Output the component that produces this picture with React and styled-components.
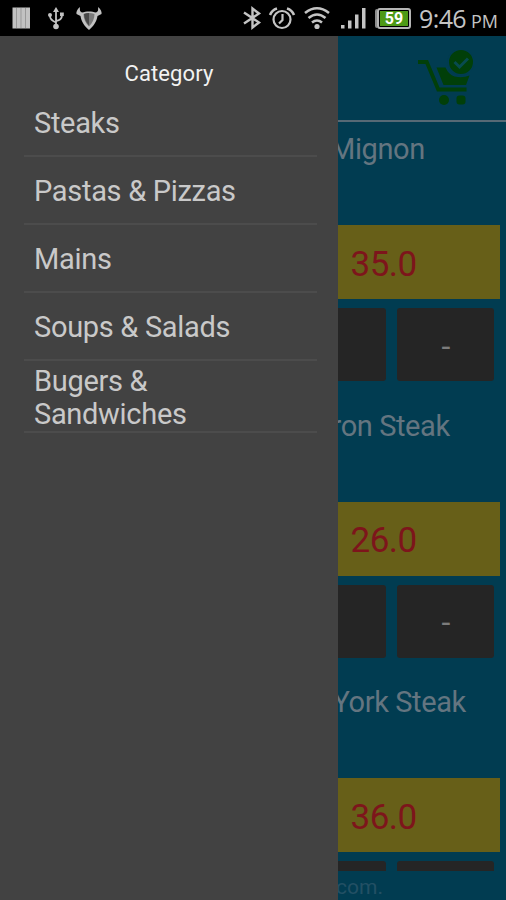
import React from 'react';
import styled, { createGlobalStyle } from 'styled-components';

const GlobalStyle = createGlobalStyle`
  * {
    box-sizing: border-box;
  }

  body {
    margin: 0;
    background: #000;
    font-family: Roboto, "Liberation Sans", sans-serif;
  }
`;

const Screen = styled.div`
  width: 506px;
  height: 900px;
  display: flex;
  flex-direction: column;
  overflow: hidden;
`;

const StatusBar = styled.header`
  height: 36px;
  flex: none;
  display: flex;
  align-items: center;
  padding: 0 8px 0 12px;
  background: #000;
  color: #c4c4c4;
`;

const StatusIcon = styled.svg`
  display: block;
  flex: none;
  width: ${({ $w }) => $w}px;
  height: 28px;
  margin-right: ${({ $gap }) => $gap || 0}px;
  overflow: visible;
`;

const Spacer = styled.div`
  flex: 1;
`;

const Battery = styled.div`
  width: 34px;
  height: 21px;
  flex: none;
  margin-right: 8px;
  padding: 1px;
  border: 2px solid #b5b5b5;
  border-radius: 3px;
  box-shadow: -3px 0 0 -1px #8d8d8d;
`;

const BatteryLevel = styled.div`
  height: 15px;
  display: flex;
  align-items: center;
  justify-content: center;
  background: #4d9a16;
  color: #fff;
  font-size: 16px;
  font-weight: 700;
  line-height: 15px;
`;

const Clock = styled.div`
  width: 79px;
  flex: none;
  display: flex;
  align-items: baseline;
  justify-content: space-between;
  padding-top: 3px;
  font-family: "Open Sans", sans-serif;
  font-size: 25px;
  line-height: 36px;
  letter-spacing: -0.6px;
  white-space: nowrap;
`;

const Meridiem = styled.span`
  font-size: 18px;
  letter-spacing: 0;
`;

const Body = styled.div`
  flex: 1;
  min-height: 0;
  display: flex;
`;

const Drawer = styled.nav`
  width: 338px;
  flex: none;
  padding: 24px 21px 0 24px;
  background: #424242;
`;

const DrawerTitle = styled.h1`
  margin: 0;
  height: 28px;
  padding-right: 3px;
  font-size: 22px;
  font-weight: 400;
  line-height: 28px;
  letter-spacing: 0.1px;
  text-align: center;
  color: #f2f2f2;
`;

const CategoryItem = styled.div`
  height: ${({ $height }) => $height}px;
  display: flex;
  align-items: center;
  padding: 4px 70px 0 10px;
  border-bottom: 2px solid #4c4c4c;
  font-size: 29px;
  line-height: 33px;
  letter-spacing: -0.31px;
  color: #c9c9c9;
`;

const Page = styled.main`
  flex: 1;
  min-width: 0;
  display: flex;
  flex-direction: column;
  overflow: hidden;
  background: #013c51;
`;

const PageHeader = styled.div`
  height: 86px;
  flex: none;
  display: flex;
  justify-content: flex-end;
  padding: 14px 32px 0 0;
  border-bottom: 2px solid #566975;
`;

const CartIcon = styled.svg`
  width: 56px;
  height: 56px;
  display: block;
`;

const MenuList = styled.div`
  height: 749px;
  flex: none;
  overflow: hidden;
`;

const MenuItem = styled.section`
  height: 276.5px;
`;

const ItemName = styled.h2`
  margin: 0 0 0 ${({ $shift }) => $shift}px;
  height: 103px;
  padding-top: 10px;
  font-size: 29px;
  font-weight: 400;
  line-height: 34px;
  letter-spacing: -0.4px;
  white-space: nowrap;
  color: #647580;
`;

const Price = styled.div`
  height: 74px;
  margin-right: 6px;
  padding: 2.5px 0 0 12.5px;
  background: #675f18;
  color: #7d151b;
  font-size: 35px;
  line-height: 74px;
  letter-spacing: -0.5px;
`;

const QuantityRow = styled.div`
  display: flex;
  gap: 11px;
  margin-top: 9px;
`;

const QuantityButton = styled.button`
  width: ${({ $width }) => $width}px;
  height: 73px;
  padding: 2px 0 0 1px;
  border: 0;
  border-radius: ${({ $cut }) => ($cut ? '0 3px 3px 0' : '3px')};
  background: #252525;
  color: #7c7c7c;
  font-family: inherit;
  font-size: 32px;
`;

const Footer = styled.footer`
  height: 29px;
  margin-left: -2px;
  font-size: 21px;
  line-height: 32px;
  letter-spacing: 0;
  color: #235064;
`;

const categories = [
  { name: 'Steaks', height: 68.5 },
  { name: 'Pastas & Pizzas', height: 68 },
  { name: 'Mains', height: 68 },
  { name: 'Soups & Salads', height: 68.5 },
  { name: 'Bugers & Sandwiches', height: 72 },
];

const dishes = [
  { name: 'Mignon', price: '35.0', shift: -8 },
  { name: 'ron Steak', price: '26.0', shift: -6.5 },
  { name: 'York Steak', price: '36.0', shift: -5.5 },
];

function StatusIcons() {
  return (
    <>
      <StatusIcon $w={18} $gap={18} viewBox="0 0 18 28">
        <path d="M0.500 3.500h17.500v21H0.500z" fill="#c2c2c2" />
        <path d="M4.500 4v20M9 4v20M13.500 4v20" stroke="#999" strokeWidth="1" />
      </StatusIcon>
      <StatusIcon $w={16} $gap={12} viewBox="0 0 16 28" fill="none" stroke="#c2c2c2" strokeWidth="1.8">
        <path d="M8 7v15M2 12q0 4 6 6.500M14 11q0 5-6 6" />
        <path d="M8 3l3 5H5z" fill="#c2c2c2" stroke="none" />
        <circle cx="8" cy="22.500" r="2.800" fill="#c2c2c2" stroke="none" />
        <circle cx="2" cy="11" r="2" fill="#c2c2c2" stroke="none" />
        <path d="M12 8.500h3.800v3.600H12z" fill="#c2c2c2" stroke="none" />
      </StatusIcon>
      <StatusIcon $w={26} viewBox="0 0 26 28">
        <path
          d="M4 3C1 5.500 0 8 .5 10l4 2c1 6 4 10 8.500 14 4.500-4 7.500-8 8.500-14l4-2C26 8 25 5.500 22 3c.5 3 0 5-2 5.500-4-1.500-10-1.500-14 0C4 8 3.500 6 4 3z"
          fill="#c2c2c2"
        />
        <path d="M7.500 10q5.500-2 11 0c0 5-2 9-5.500 12.500C9.500 19 7.500 15 7.500 10z" fill="#7a7a7a" />
        <path d="M8 10q2.500-1 5-1v12.500Q8.500 17 8 10z" fill="#484848" />
      </StatusIcon>
      <Spacer />
      <StatusIcon $w={18} $gap={8} viewBox="0 0 18 28" fill="none" stroke="#c4c4c4" strokeWidth="2.4">
        <path d="M1 8.500l15 10-6.500 5V4.500l6.500 5L1 19.500" />
      </StatusIcon>
      <StatusIcon $w={26} $gap={9} viewBox="0 0 26 28" fill="none" stroke="#c4c4c4" strokeWidth="2.200">
        <circle cx="13" cy="15.500" r="8.500" />
        <path d="M13.500 10v6l-3.500 3.500" />
        <path d="M1 11Q3 6 8 4.500M25 11Q23 6 18 4.500" strokeWidth="2.600" />
      </StatusIcon>
      <StatusIcon $w={26} $gap={11.5} viewBox="0 0 26 28" fill="none" stroke="#c4c4c4" strokeWidth="2.600">
        <path d="M1 9q12-9.500 24 0M4.500 14q8.500-7 17 0M8 18.500q5-4 10 0" />
        <circle cx="13" cy="22.500" r="2.600" fill="#c4c4c4" stroke="none" />
      </StatusIcon>
      <StatusIcon $w={25} $gap={11} viewBox="0 0 25 28" fill="#c4c4c4">
        <path d="M0 21h3.500v3.500H0zM7 16.500h3.500v8H7zM14 10.500h3.500v14H14zM21 4h3.500v20.500H21z" />
      </StatusIcon>
    </>
  );
}

function App() {
  return (
    <Screen>
      <GlobalStyle />
      <StatusBar>
        <StatusIcons />
        <Battery>
          <BatteryLevel>59</BatteryLevel>
        </Battery>
        <Clock>
          <span>9:46</span>
          <Meridiem>PM</Meridiem>
        </Clock>
      </StatusBar>

      <Body>
        <Drawer>
          <DrawerTitle>Category</DrawerTitle>
          {categories.map(({ name, height }) => (
            <CategoryItem key={name} $height={height}>
              {name}
            </CategoryItem>
          ))}
        </Drawer>

        <Page>
          <PageHeader>
            <CartIcon viewBox="0 0 56 56" fill="#013f09">
              <path d="M0 10h10l11.500 27.500H48.500v4H19L7.500 14H0z" />
              <path d="M18.500 17.500h9q3 7 9 9 8 2 15-1L48 35H25.500z" />
              <circle cx="26" cy="50" r="5" />
              <rect x="38.500" y="45.500" width="9" height="9" rx="3" />
              <circle cx="43" cy="12" r="12.750" stroke="#013c51" strokeWidth="1.500" />
              <path d="M36.500 12l5 5 8.500-8.500" fill="none" stroke="#084b50" strokeWidth="3" />
            </CartIcon>
          </PageHeader>
          <MenuList>
            {dishes.map(({ name, price, shift }) => (
              <MenuItem key={name}>
                <ItemName $shift={shift}>{name}</ItemName>
                <Price>{price}</Price>
                <QuantityRow>
                  <QuantityButton $width={48} $cut />
                  <QuantityButton $width={97}>-</QuantityButton>
                </QuantityRow>
              </MenuItem>
            ))}
          </MenuList>
          <Footer>com.</Footer>
        </Page>
      </Body>
    </Screen>
  );
}

export default App;
